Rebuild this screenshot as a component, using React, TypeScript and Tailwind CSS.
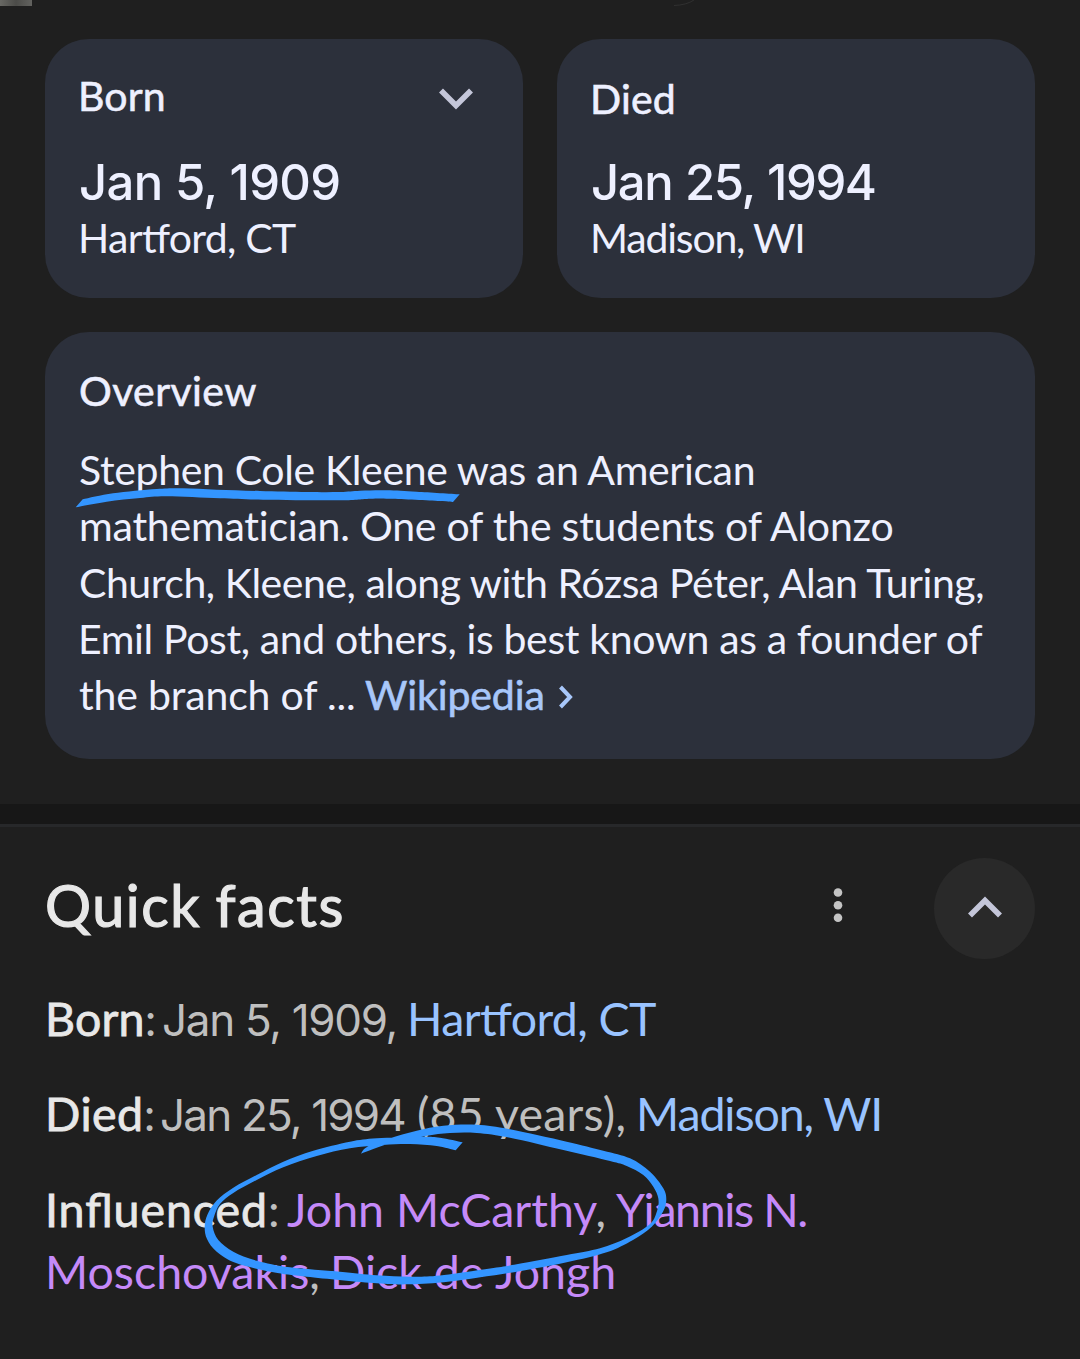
import type { ReactNode } from "react";

type Point = [number, number];

// Catmull-Rom spline through the points, as cubic Bézier segments.
function curve(points: Point[], command: "M" | "L") {
  let d = `${command}${points[0][0]} ${points[0][1]}`;
  for (let i = 0; i < points.length - 1; i++) {
    const p0 = points[i - 1] ?? points[i];
    const p1 = points[i];
    const p2 = points[i + 1];
    const p3 = points[i + 2] ?? p2;
    d += `C${p1[0] + (p2[0] - p0[0]) / 6} ${p1[1] + (p2[1] - p0[1]) / 6} ${p2[0] - (p3[0] - p1[0]) / 6} ${p2[1] - (p3[1] - p1[1]) / 6} ${p2[0]} ${p2[1]}`;
  }
  return d;
}

const underlineTop: Point[] = [
  [82.7, 499.3], [113, 493.3], [156.7, 489], [183, 488.3], [216.7, 489.7], [260, 491], [306.7, 492],
  [340, 492], [360, 490.7], [386.7, 490.3], [416.7, 491.7], [459.7, 494.3],
];
const underlineBottom: Point[] = [
  [453, 502], [440, 501], [390, 498.7], [370, 498.7], [340, 500.3], [263, 499.7], [220, 498.3],
  [166.7, 496.3], [140, 498], [106.7, 501.7], [75.7, 507.3],
];
const loopOuter: Point[] = [
  [361, 1153.7], [367, 1147], [390, 1138.3], [416.7, 1130.7], [443.3, 1125.7], [476.7, 1124.7], [510, 1129.3],
  [566.7, 1141.7], [603.3, 1150.7], [630, 1158.3], [650, 1171.7], [663.3, 1188.3], [666.3, 1200],
  [663, 1211.7], [651.7, 1226.7], [633, 1240], [606.7, 1252.3], [566.7, 1262.3], [516.7, 1271.7],
  [450, 1281.5], [410, 1284.3], [376.7, 1283.3], [306.7, 1276.7], [273.3, 1272.3], [236.7, 1263.3],
  [216.7, 1251.7], [207, 1239], [204.7, 1226.7], [207.5, 1214.5], [216.7, 1200.5], [233.3, 1187.8],
  [256.7, 1175], [283.3, 1161.7], [313.3, 1150.7], [350, 1141.7], [376.7, 1138.3], [420, 1136.7],
  [440, 1137.7], [462.7, 1142.3],
];
const loopInner: Point[] = [
  [455.7, 1150.3], [436.7, 1146], [410, 1144], [383, 1145], [350, 1148.3], [316.7, 1156], [283.3, 1167.3],
  [256.7, 1180], [233.3, 1193], [220, 1204], [214, 1216.7], [212.7, 1226.7], [218.3, 1240],
  [233.3, 1251.7], [256.7, 1260.7], [290, 1267.3], [340, 1271.7], [376.7, 1275.3], [410, 1276.7],
  [440, 1275.5], [490, 1268.5], [516.7, 1264.3], [566.7, 1255], [600, 1248.3], [626.7, 1238],
  [650, 1224], [657.3, 1210], [658.3, 1198.3], [653.3, 1186.7], [643.3, 1175], [626.7, 1166],
  [610, 1161], [563.3, 1150], [510, 1137.7], [476.7, 1133], [450, 1133], [425, 1136], [390, 1143.3], [361, 1153.7],
];

function PenMarks() {
  return (
    <svg className="pointer-events-none absolute inset-0" width="1080" height="1359" fill="#3395ff">
      <path d={curve(underlineTop, "M") + curve(underlineBottom, "L") + "Z"} />
      <path d={curve(loopOuter, "M") + curve(loopInner, "L") + "Z"} />
    </svg>
  );
}

function Card({ className, children }: { className: string; children: ReactNode }) {
  return <section className={`rounded-[44px] bg-[#2c303b] text-[#eef0ff] ${className}`}>{children}</section>;
}

const ligatures = "[font-feature-settings:'liga']";
const label = "text-[41px] leading-[56px] [-webkit-text-stroke:0.6px_#eef0ff]";
const factName = "text-[#e8e8e8] [-webkit-text-stroke:0.8px_#e8e8e8]";

export default function App() {
  return (
    <div className="relative flex h-[1359px] w-[1080px] flex-col overflow-hidden whitespace-nowrap bg-[#1f1f1f] font-['Lato',sans-serif]">
      <div className="flex h-[39px] shrink-0 items-start">
        <div className="h-1.5 w-8 bg-linear-to-r from-[#686864] via-[#4c4c49] to-[#62625f]" />
        <svg className="ml-[640px]" width="30" height="7" fill="none" stroke="#303030">
          <path d="M2 5.5C10 5.2 17 3.5 22 0" />
        </svg>
      </div>

      <div className="mx-[45px] grid grid-cols-2 gap-[34px]">
        <Card className="h-[259px] pl-8 pt-[29px]">
          <div className="flex items-center justify-between pr-[50px]">
            <h3 className={`${label} pl-px tracking-[0.1px]`}>Born</h3>
            <svg className="mt-1.5" width="34" height="22" fill="none" stroke="#c4c6d9" strokeWidth="5.6">
              <path d="M2 2.5L17 17.5L32 2.5" />
            </svg>
          </div>
          <div className="mt-[27px] pl-0.5 font-[Inter] text-[49px] font-medium leading-[64px] tracking-[-0.65px]">Jan 5, 1909</div>
          <div className={`-mt-px pl-px text-[41px] leading-[48px] tracking-[-0.7px] ${ligatures}`}>Hartford, CT</div>
        </Card>
        <Card className="h-[259px] pl-8 pt-8">
          <h3 className={`${label} pl-px tracking-[0.2px]`}>Died</h3>
          <div className="mt-[24px] pl-0.5 font-[Inter] text-[49px] font-medium leading-[64px] tracking-[-1.4px] [word-spacing:1px]">Jan 25, 1994</div>
          <div className="-mt-px pl-px text-[41px] leading-[48px] tracking-[-1.2px]">Madison, WI</div>
        </Card>
      </div>

      <Card className="mx-[45px] mt-[34px] h-[427px] shrink-0 pl-[34px] pt-[31px]">
        <h3 className={`${label} tracking-[0.4px]`}>Overview</h3>
        <div className="mt-[23px] text-[41px] leading-[56.25px]">
          <div className="tracking-[-0.35px]">Stephen Cole Kleene was an American</div>
          <div className="tracking-[-0.22px]">mathematician. One of the students of Alonzo</div>
          <div className="tracking-[-0.47px]">Church, Kleene, along with Rózsa Péter, Alan Turing,</div>
          <div className="-ml-px tracking-[-0.37px]">Emil Post, and others, is best known as a founder of</div>
          <div className="flex items-center">
            <span className="w-[286px] tracking-[-0.17px]">the branch of ...</span>
            <a className="tracking-[-0.1px] text-[#a8c7fa] [-webkit-text-stroke:0.6px_#a8c7fa]">Wikipedia</a>
            <svg className="ml-3 mt-1" width="18" height="26" fill="none" stroke="#a8c7fa" strokeWidth="4">
              <path d="M3.5 3L13 13L3.5 23" />
            </svg>
          </div>
        </div>
      </Card>

      <div className="mt-[45px] h-[23px] shrink-0 border-b-[3px] border-[#27282a] bg-[#171717]" />

      <header className="mt-[31px] flex h-[101px] shrink-0 items-center px-[45px]">
        <h2 className="flex-1 pb-2 text-[57.5px] leading-[72px] tracking-[1.6px] text-[#e8e8e8] [-webkit-text-stroke:1.2px_#e8e8e8] [word-spacing:-2px]">Quick facts</h2>
        <svg className="-mt-2 mr-[91px]" width="10" height="36" fill="#c4c4c4">
          <circle cx="5" cy="5.5" r="4.3" />
          <circle cx="5" cy="18.2" r="4.3" />
          <circle cx="5" cy="30.8" r="4.3" />
        </svg>
        <button className="flex size-[101px] items-center justify-center rounded-full bg-[#292929]">
          <svg className="-mt-1" width="34" height="22" fill="none" stroke="#c4c6d9" strokeWidth="5.6">
            <path d="M2 19.5L17 4.5L32 19.5" />
          </svg>
        </button>
      </header>

      <div className="mt-[28px] flex flex-col gap-[33px] pl-[45px] text-[46.5px] leading-[62px] text-[#bfbfbf]">
        <div className="flex h-[62px] items-baseline">
          <span className="w-[117px]"><b className={`font-normal tracking-[0.2px] ${factName}`}>Born</b>:</span>
          <span className="w-[245px] font-[Inter] text-[44px] tracking-[-1.3px]">Jan 5, 1909,</span>
          <a className={`tracking-[-0.6px] text-[#99c3ff] ${ligatures}`}>Hartford, CT</a>
        </div>
        <div className="flex h-[62px] items-baseline">
          <span className="w-[115px]"><b className={`font-normal tracking-[0.5px] ${factName}`}>Died</b>:</span>
          <span className="w-[257px] font-[Inter] text-[44px] tracking-[-1.8px]">Jan 25, 1994</span>
          <span className="w-[219px] tracking-[0.2px]">(85 years),</span>
          <a className="tracking-[-1.1px] text-[#99c3ff]">Madison, WI</a>
        </div>
        <div className="mt-px">
          <div className="flex h-[62px] items-baseline">
            <span className="w-[242px]"><b className={`font-normal tracking-[0.95px] ${factName} ${ligatures}`}>Influenced</b>:</span>
            <span className="w-[329px]"><a className="text-[#c58af9]">John McCarthy</a>,</span>
            <a className="tracking-[-1.4px] text-[#c58af9]">Yiannis N.</a>
          </div>
          <div className="flex h-[62px] items-baseline">
            <span className="w-[285px]"><a className="text-[#c58af9]">Moschovakis</a>,</span>
            <a className="text-[#c58af9]">Dick de Jongh</a>
          </div>
        </div>
      </div>

      <PenMarks />
    </div>
  );
}
